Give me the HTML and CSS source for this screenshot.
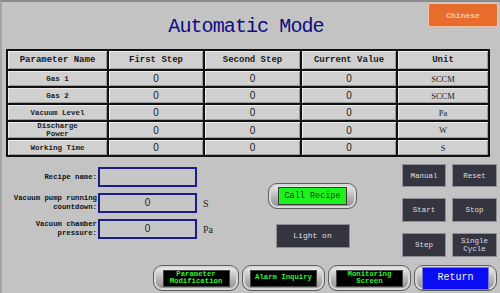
FILE: index.html
```html
<!DOCTYPE html>
<html lang="en">
<head>
    <meta charset="UTF-8">
    <meta name="viewport" content="width=device-width, initial-scale=1.0">
    <title>Automatic Mode</title>
    <link rel="stylesheet" href="styles.css">
</head>
<body>
    <!-- Header -->
    <header class="header">
        <h1 class="title">Automatic Mode</h1>
        <button class="lang-button">Chinese</button>
    </header>

    <!-- Parameter Table -->
    <table class="params">
        <colgroup>
            <col style="width:101px">
            <col style="width:96px">
            <col style="width:97px">
            <col style="width:96px">
            <col>
        </colgroup>
        <thead>
            <tr>
                <th>Parameter Name</th>
                <th>First Step</th>
                <th>Second Step</th>
                <th>Current Value</th>
                <th>Unit</th>
            </tr>
        </thead>
        <tbody>
            <tr>
                <td class="name">Gas 1</td>
                <td>0</td><td>0</td><td>0</td>
                <td class="unit">SCCM</td>
            </tr>
            <tr>
                <td class="name">Gas 2</td>
                <td>0</td><td>0</td><td>0</td>
                <td class="unit">SCCM</td>
            </tr>
            <tr>
                <td class="name">Vacuum Level</td>
                <td>0</td><td>0</td><td>0</td>
                <td class="unit">Pa</td>
            </tr>
            <tr>
                <td class="name">Discharge<br>Power</td>
                <td>0</td><td>0</td><td>0</td>
                <td class="unit">W</td>
            </tr>
            <tr>
                <td class="name">Working Time</td>
                <td>0</td><td>0</td><td>0</td>
                <td class="unit">S</td>
            </tr>
        </tbody>
    </table>

    <!-- Lower Panel -->
    <div class="lower">
        <div class="form">
            <div class="field">
                <label class="field-label">Recipe name:</label>
                <div class="field-box"></div>
            </div>
            <div class="field">
                <label class="field-label">Vacuum pump running<br>countdown:</label>
                <div class="field-box">0</div>
                <span class="field-unit">S</span>
            </div>
            <div class="field">
                <label class="field-label">Vacuum chamber<br>pressure:</label>
                <div class="field-box">0</div>
                <span class="field-unit">Pa</span>
            </div>
        </div>

        <div class="mid">
            <div class="frame recipe-frame">
                <button class="recipe-button">Call Recipe</button>
            </div>
            <button class="dark-button light-button">Light on</button>
        </div>

        <div class="controls">
            <button class="dark-button">Manual</button>
            <button class="dark-button">Reset</button>
            <button class="dark-button">Start</button>
            <button class="dark-button">Stop</button>
            <button class="dark-button">Step</button>
            <button class="dark-button">Single<br>Cycle</button>
        </div>
    </div>

    <!-- Bottom Navigation -->
    <nav class="nav">
        <div class="frame nav-frame wide">
            <button class="nav-button">Parameter<br>Modification</button>
        </div>
        <div class="frame nav-frame">
            <button class="nav-button">Alarm Inquiry</button>
        </div>
        <div class="frame nav-frame">
            <button class="nav-button">Monitoring<br>Screen</button>
        </div>
        <div class="frame nav-frame">
            <button class="nav-button return-button">Return</button>
        </div>
    </nav>
</body>
</html>
```

FILE: styles.css
```css
body {
    font-family: 'Liberation Mono', monospace;
    margin: 0;
    padding: 0;
    width: 500px;
    height: 293px;
    box-sizing: border-box;
    background-color: #c3c3c3;
    border-top: 2px solid #8c8c8c;
    border-left: 2px solid #a4a4a4;
    overflow: hidden;
}

button {
    font-family: inherit;
    cursor: pointer;
}

/* Header */
.header {
    display: grid;
    grid-template-columns: 1fr auto 1fr;
    height: 47px;
}

.title {
    grid-column: 2;
    margin: 13px 10px 0 0;
    font-size: 20px;
    font-weight: normal;
    letter-spacing: -0.9px;
    color: #0c0c84;
    line-height: 24px;
}

.lang-button {
    grid-column: 3;
    justify-self: end;
    width: 70px;
    height: 24px;
    margin: 1px 2px 0 0;
    background-color: #e86c2c;
    border: 1px solid #f5c2a4;
    border-radius: 2px;
    color: #f6cdb6;
    font-size: 8px;
    font-weight: bold;
}

/* Table */
.params {
    margin-left: 4px;
    width: 484px;
    table-layout: fixed;
    border-collapse: separate;
    border-spacing: 0;
    border-top: 2px solid #111;
    border-left: 2px solid #111;
}

.params th,
.params td {
    padding: 0;
    text-align: center;
    background-color: #d0d0d0;
    border-right: 2px solid #111;
    border-bottom: 2px solid #111;
    box-shadow: inset 1px 1px 0 #ececec, inset -1px -1px 0 #9a9a9a;
    overflow: hidden;
}

.params th {
    height: 18px;
    font-size: 9px;
    color: #1a1a1a;
}

.params td {
    height: 15px;
    font-family: 'Liberation Sans', sans-serif;
    font-size: 10px;
    color: #222;
}

.params td.name {
    font-family: 'Liberation Mono', monospace;
    font-size: 7.5px;
    font-weight: bold;
    line-height: 8px;
}

.params td.unit {
    font-family: 'Liberation Serif', serif;
    font-size: 8.5px;
}

/* Lower panel */
.lower {
    display: flex;
    height: 104px;
}

.form {
    width: 266px;
    padding-top: 10px;
    display: flex;
    flex-direction: column;
    gap: 6px;
}

.field {
    display: flex;
    align-items: center;
    height: 20px;
}

.field-label {
    width: 95px;
    margin-right: 1px;
    text-align: right;
    font-size: 7.3px;
    font-weight: bold;
    line-height: 9px;
    color: #111;
}

.field-box {
    width: 95px;
    height: 16px;
    border: 2px solid #1c1c86;
    background-color: #c6c6c6;
    text-align: center;
    font-family: 'Liberation Sans', sans-serif;
    font-size: 10px;
    line-height: 16px;
    color: #222;
}

.field-unit {
    margin-left: 6px;
    font-family: 'Liberation Serif', serif;
    font-size: 10px;
    color: #222;
}

.mid {
    width: 89px;
    padding-top: 26px;
    display: flex;
    flex-direction: column;
    align-items: center;
    gap: 15px;
}

/* Rounded gray frames around buttons */
.frame {
    box-sizing: border-box;
    border: 1px solid #5e5e5e;
    border-radius: 9px;
    background: linear-gradient(#f2f2f2, #b0b0b0 60%, #8e8e8e);
    box-shadow: inset 0 0 0 2px #d8d8d8;
    display: flex;
    align-items: center;
    justify-content: center;
}

.recipe-frame {
    width: 89px;
    height: 26px;
}

.recipe-button {
    width: 69px;
    height: 18px;
    padding: 0;
    background-color: #1cf31c;
    border: 1px solid #3a3a3a;
    color: #114411;
    font-size: 8.5px;
}

.dark-button {
    padding: 0;
    background-color: #35353f;
    border: 1px solid #8d8d96;
    color: #dedee4;
    font-size: 7.5px;
    line-height: 8px;
}

.light-button {
    width: 74px;
    height: 24px;
    font-size: 8px;
}

.controls {
    margin-left: 45px;
    padding-top: 7px;
    display: grid;
    grid-template-columns: 44px 45px;
    grid-template-rows: 23px 24px 24px;
    gap: 11px 6px;
}

/* Bottom navigation */
.nav {
    display: flex;
    justify-content: flex-end;
    gap: 3px;
    padding: 4px 3px 0 0;
}

.nav-frame {
    width: 83px;
    height: 26px;
}

.nav-frame.wide {
    width: 86px;
}

.nav-button {
    width: 67px;
    height: 17px;
    padding: 0;
    background-color: #000;
    border: 1px solid #444;
    color: #2cf42c;
    font-size: 7.3px;
    font-weight: bold;
    line-height: 7.5px;
}

.return-button {
    height: 23px;
    background-color: #0c0cf4;
    border: 1px solid #7a7ad0;
    color: #f0f0f0;
    font-size: 10px;
    font-weight: normal;
}
```
